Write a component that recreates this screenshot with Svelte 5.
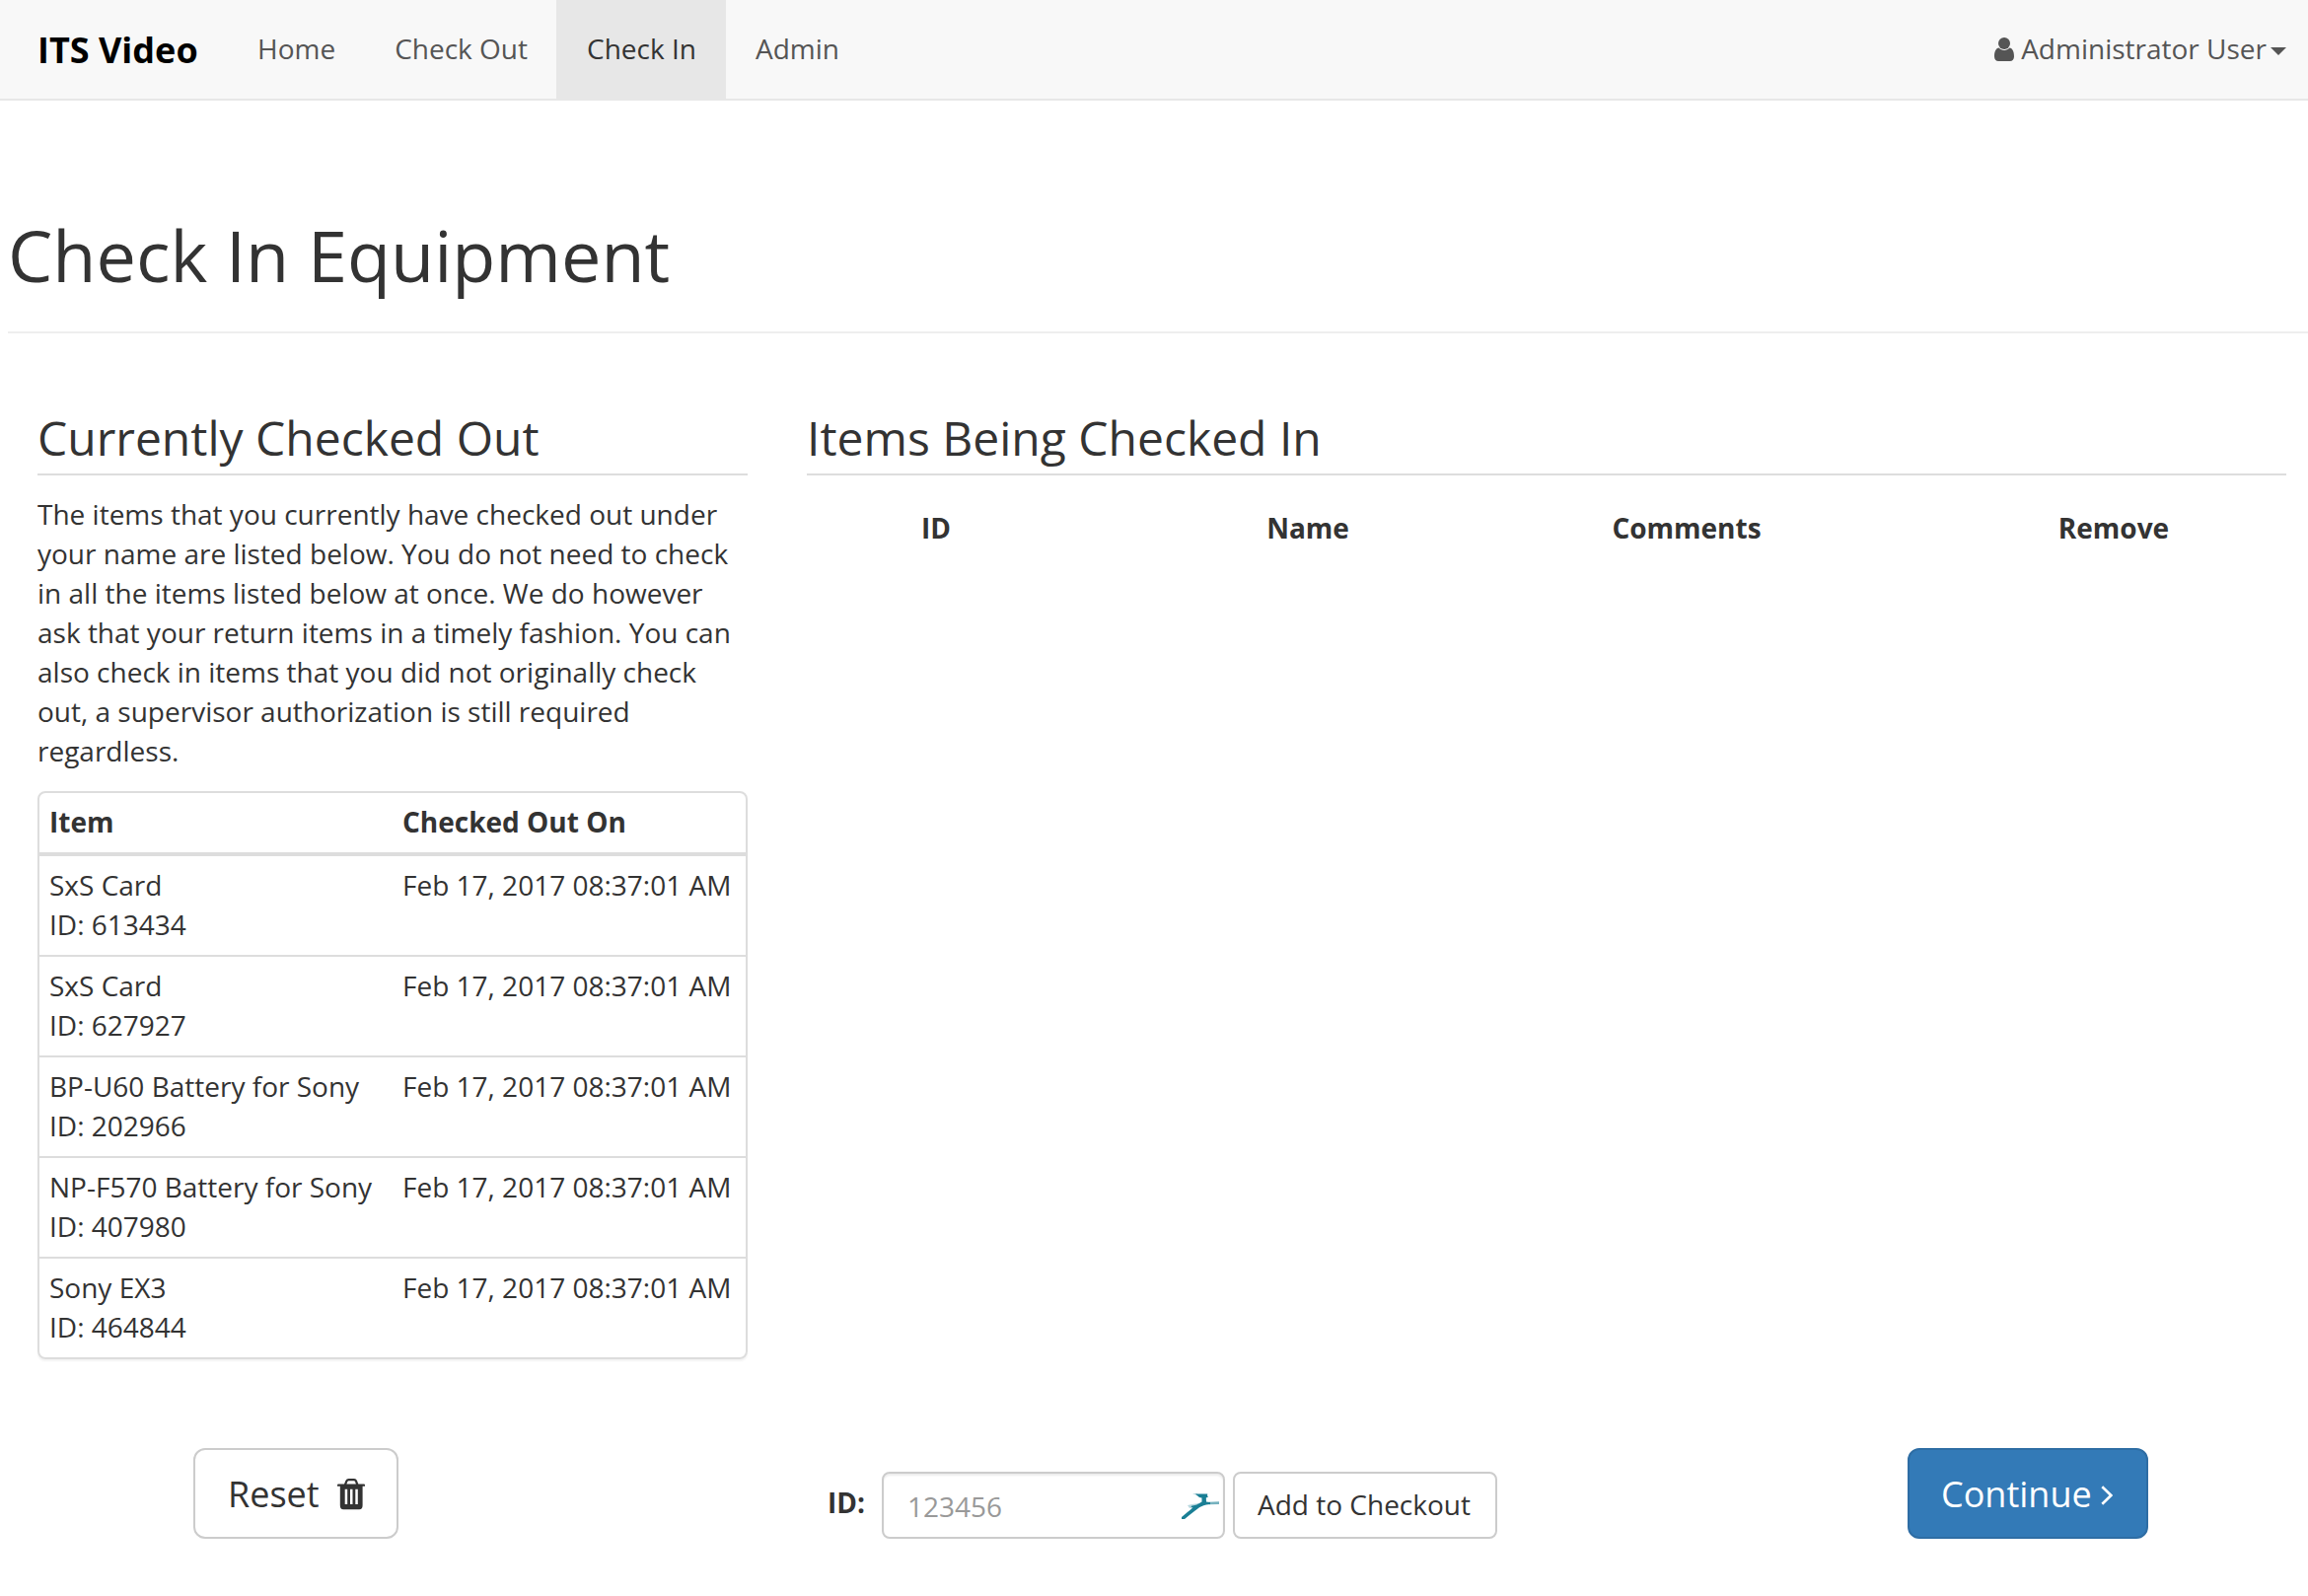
<script lang="ts">
  const links = ['Home', 'Check Out', 'Check In', 'Admin'];
  const active = 'Check In';
  const when = 'Feb 17, 2017 08:37:01 AM';
  const items = [
    { name: 'SxS Card', id: '613434' },
    { name: 'SxS Card', id: '627927' },
    { name: 'BP-U60 Battery for Sony', id: '202966' },
    { name: 'NP-F570 Battery for Sony', id: '407980' },
    { name: 'Sony EX3', id: '464844' }
  ];
</script>

<nav class="navbar">
  <div class="brand">ITS Video</div>
  {#each links as link}
    <div class="link" class:active={link === active}>{link}</div>
  {/each}
  <div class="user">
    <svg class="user-icon" width="20" height="24" viewBox="0 0 20 24">
      <circle cx="10" cy="6" r="6" />
      <path d="M4.6 10.6C1.5 11 0 14.500 0 19.200C0 22 1.700 24 4.200 24H15.800C18.300 24 20 22 20 19.200C20 14.500 18.500 11 15.400 10.600C14 12.100 12.100 13 10 13C7.900 13 6 12.100 4.600 10.600Z" />
    </svg>
    <span>Administrator User</span>
    <i class="caret"></i>
  </div>
</nav>

<main>
  <h1>Check In Equipment</h1>
  <div class="columns">
    <section class="left">
      <h2>Currently Checked Out</h2>
      <p>The items that you currently have checked out under your name are listed below. You do not need to check in all the items listed below at once. We do however ask that your return items in a timely fashion. You can also check in items that you did not originally check out, a supervisor authorization is still required regardless.</p>
      <div class="table">
        <div class="row head"><div>Item</div><div>Checked Out On</div></div>
        {#each items as item}
          <div class="row"><div>{item.name}<br />ID: {item.id}</div><div>{when}</div></div>
        {/each}
      </div>
    </section>
    <section class="right">
      <h2>Items Being Checked In</h2>
      <div class="heads">
        <div>ID</div><div>Name</div><div>Comments</div><div class="remove">Remove</div>
      </div>
    </section>
  </div>

  <div class="actions">
    <button class="btn large reset">
      <span>Reset</span>
      <svg width="28" height="32" viewBox="0 0 28 32">
        <path fill-rule="evenodd" d="M0 6.500Q0 5.500 1 5.500H7L8.400 2.100Q9.300 0 11.500 0H17Q19.200 0 20 2.100L21.300 5.500H27Q28 5.500 28 6.500V7.800H25.600V27Q25.600 31.300 22.200 31.300H6.200Q2.800 31.300 2.800 27V7.800H0ZM9.400 5.500H18.900L18.100 3.200Q17.800 2.300 16.900 2.300H11.500Q10.600 2.300 10.300 3.200ZM7.700 10.800V26H10.200V10.800ZM13 10.800V26H15.500V10.800ZM18.300 10.800V26H20.800V10.800Z" />
      </svg>
    </button>
    <div class="add-form">
      <label for="item-id">ID:</label>
      <div class="field">
        <input id="item-id" placeholder="123456" />
        <svg class="gazelle" width="38" height="27" viewBox="0 0 38 27">
          <path d="M14 .4H26.300L26 2.200L27 3.500L24.800 4.600L25 8.500L29 8.900V11L25 11.500C21 12.700 18.500 13.500 17 15C12 18.500 7.500 22.500 3 26H0V24C4 20.300 8 17.500 11.500 14.200L9.500 14.300L10 12.800C14 12 17.500 10.800 20.500 8.600V4.500C18 4.500 17 3 16 2.200Z" />
          <path class="leg" d="M28 8.800L38 8.300V11L28 11.200Z" />
          <path class="faint" d="M6 12L12 10.800L18 10L12 14L8 15ZM11 0H16V2.500Z" />
        </svg>
      </div>
      <button class="btn">Add to Checkout</button>
    </div>
    <button class="btn large primary">
      <span>Continue</span>
      <svg width="12" height="20" viewBox="0 0 12 20">
        <path d="M1.300 1.300L10.300 10L1.300 18.700" />
      </svg>
    </button>
  </div>
</main>

<style>
  :global(body) {
    background: #fff;
    color: #333;
    font: 28px/40px 'Open Sans', sans-serif;
    overflow: hidden;
  }

  .navbar {
    display: flex;
    box-sizing: border-box;
    height: 102px;
    padding: 0 22px 0 38px;
    background: #f8f8f8;
    border-bottom: 2px solid #e7e7e7;
    color: #555;
    line-height: 98px;
  }
  .brand {
    width: 193px;
    color: #000;
    font-size: 36px;
    font-weight: 700;
    line-height: 102px;
    white-space: nowrap;
  }
  .link {
    height: 102px;
    padding: 0 30px;
  }
  .link.active {
    margin-left: -1px;
    padding-left: 31px;
    background: #e7e7e7;
    color: #333;
  }
  .user {
    display: flex;
    align-items: center;
    height: 98px;
    margin-left: auto;
  }
  .user-icon {
    margin: 2px 7px 0 0;
    fill: #555;
  }
  .caret {
    margin: 6px 0 0 4px;
    border: 8px solid transparent;
    border-top-color: #555;
    border-bottom: 0;
  }

  main {
    padding-left: 8px;
  }
  h1, h2, p {
    margin: 0;
    font-weight: 400;
  }
  h1 {
    padding: 117px 0 39px;
    border-bottom: 2px solid #eee;
    font-size: 72px;
    line-height: 78px;
  }
  .columns {
    display: grid;
    grid-template-columns: 720px 1500px;
    gap: 60px;
    padding: 79px 0 0 30px;
  }
  h2 {
    padding: 0 0 9px;
    border-bottom: 2px solid #ddd;
    font-size: 48px;
    line-height: 54px;
  }
  p {
    margin: 19px 0 21px;
  }
  .table {
    border: 2px solid #ddd;
    border-radius: 8px;
    box-shadow: 0 2px 2px rgba(0, 0, 0, 0.05);
  }
  .row {
    display: grid;
    grid-template-columns: 358px 1fr;
    padding: 9px 10px 11px;
    border-top: 2px solid #ddd;
  }
  .row.head {
    border-top: 0;
    font-weight: 700;
  }
  .row.head + .row {
    border-top-width: 4px;
  }
  .heads {
    display: grid;
    grid-template-columns: 262px 492px 276px 1fr;
    padding-top: 33px;
    font-weight: 700;
    text-align: center;
  }
  .remove {
    padding-left: 120px;
  }

  .actions {
    display: flex;
    align-items: flex-end;
    padding: 90px 162px 0 188px;
  }
  .btn {
    box-sizing: border-box;
    height: 68px;
    padding: 0 25px 2px 23px;
    background: #fff;
    border: 2px solid #ccc;
    border-radius: 8px;
    color: #333;
    font: 28px/40px 'Open Sans', sans-serif;
    white-space: nowrap;
  }
  .btn.large {
    display: flex;
    align-items: center;
    height: 92px;
    padding: 0 32px;
    border-radius: 12px;
    font-size: 36px;
  }
  .large span {
    padding-top: 2px;
  }
  .btn.reset {
    width: 208px;
    padding-left: 33px;
    justify-content: space-between;
  }
  .reset svg {
    margin-top: 1px;
    fill: #333;
  }
  .btn.primary {
    width: 244px;
    margin-left: auto;
    padding-right: 34px;
    justify-content: space-between;
    background: #337ab7;
    border-color: #2e6da4;
    color: #fff;
  }
  .primary svg {
    margin-top: 3px;
    fill: none;
    stroke: #fff;
    stroke-width: 2.6;
  }
  .add-form {
    display: flex;
    margin-left: 435px;
  }
  label {
    width: 55px;
    line-height: 62px;
    font-weight: 700;
  }
  .field {
    position: relative;
    margin-right: 8px;
  }
  input {
    display: block;
    box-sizing: border-box;
    width: 348px;
    height: 68px;
    padding: 2px 24px 0;
    border: 2px solid #ccc;
    border-radius: 8px;
    box-shadow: inset 0 2px 2px rgba(0, 0, 0, 0.075);
    font: 28px 'Open Sans', sans-serif;
  }
  input::placeholder {
    color: #999;
  }
  .gazelle {
    position: absolute;
    top: 22px;
    left: 304px;
    fill: #1a7f95;
  }
  .leg {
    opacity: 0.6;
  }
  .faint {
    opacity: 0.3;
  }
</style>
